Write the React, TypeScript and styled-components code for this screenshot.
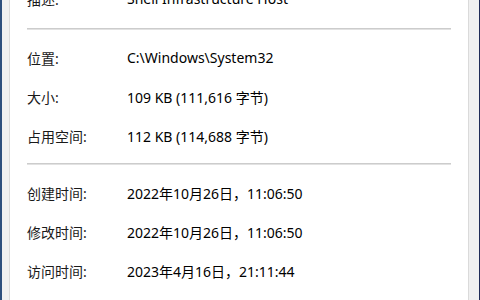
import React from "react";
import styled, { createGlobalStyle } from "styled-components";

const Global = createGlobalStyle`
  html, body { margin: 0; padding: 0; background: #f0f0f0; }
  body { width: 480px; height: 300px; overflow: hidden; }
`;

const Frame = styled.div`
  box-sizing: border-box;
  width: 480px;
  height: 300px;
  display: flex;
  background: #f0f0f0;
  border-left: 2px solid #2d4f7c;
  border-right: 1px solid #1f2b57;
  padding: 0 10px 0 7px;
  overflow: hidden;
`;

const Panel = styled.div`
  flex: 1;
  background: #ffffff;
  border-left: 1px solid #dadada;
  border-right: 1px solid #dadada;
  padding: 0 17px 0 17px;
  overflow: hidden;
`;

const Content = styled.div`
  margin-top: -23px;
  display: flex;
  flex-direction: column;
  font-family: "Noto Sans", "Noto Sans CJK SC", sans-serif;
  font-size: 14px;
  color: #000;
`;

const Row = styled.div<{ $lead?: boolean }>`
  height: ${(p) => (p.$lead ? "43px" : "39px")};
  display: grid;
  grid-template-columns: 100px 1fr;
  align-items: center;
  white-space: nowrap;
`;

const Label = styled.span`
  color: #1a1a1a;
`;

const Value = styled.span`
  color: #000;
`;

const Separator = styled.div`
  margin: 8px 0;
  height: 1px;
  background: #cccccc;
  border-bottom: 1px solid #e2e2e2;
`;

const sections: [string, string][][] = [
  [["描述:", "Shell Infrastructure Host"]],
  [
    ["位置:", "C:\\Windows\\System32"],
    ["大小:", "109 KB (111,616 字节)"],
    ["占用空间:", "112 KB (114,688 字节)"],
  ],
  [
    ["创建时间:", "2022年10月26日，11:06:50"],
    ["修改时间:", "2022年10月26日，11:06:50"],
    ["访问时间:", "2023年4月16日，21:11:44"],
  ],
];

export default function App() {
  return (
    <>
      <Global />
      <Frame>
        <Panel>
          <Content>
            {sections.map((rows, i) => (
              <React.Fragment key={i}>
                {i > 0 && <Separator />}
                {rows.map(([l, v]) => (
                  <Row key={l} $lead={i === 0}>
                    <Label>{l}</Label>
                    <Value>{v}</Value>
                  </Row>
                ))}
              </React.Fragment>
            ))}
          </Content>
        </Panel>
      </Frame>
    </>
  );
}
